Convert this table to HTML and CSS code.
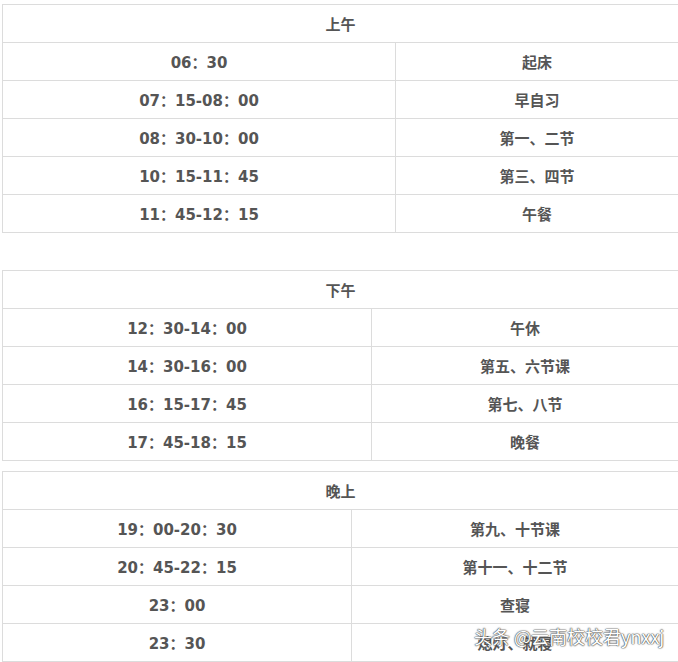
FILE: index.html
```html
<!DOCTYPE html>
<html lang="zh-CN">
<head>
<meta charset="utf-8">
<link rel="stylesheet" href="styles.css">
</head>
<body>
<div class="page">
  <table class="sched t1">
    <colgroup><col class="c1"><col></colgroup>
    <tr><th colspan="2">上午</th></tr>
    <tr><td>06：30</td><td>起床</td></tr>
    <tr><td>07：15-08：00</td><td>早自习</td></tr>
    <tr><td>08：30-10：00</td><td>第一、二节</td></tr>
    <tr><td>10：15-11：45</td><td>第三、四节</td></tr>
    <tr><td>11：45-12：15</td><td>午餐</td></tr>
  </table>
  <table class="sched t2">
    <colgroup><col class="c1"><col></colgroup>
    <tr><th colspan="2">下午</th></tr>
    <tr><td>12：30-14：00</td><td>午休</td></tr>
    <tr><td>14：30-16：00</td><td>第五、六节课</td></tr>
    <tr><td>16：15-17：45</td><td>第七、八节</td></tr>
    <tr><td>17：45-18：15</td><td>晚餐</td></tr>
  </table>
  <table class="sched t3">
    <colgroup><col class="c1"><col></colgroup>
    <tr><th colspan="2">晚上</th></tr>
    <tr><td>19：00-20：30</td><td>第九、十节课</td></tr>
    <tr><td>20：45-22：15</td><td>第十一、十二节</td></tr>
    <tr><td>23：00</td><td>查寝</td></tr>
    <tr><td>23：30</td><td>熄灯、就寝</td></tr>
  </table>
  <div class="watermark">头条 @云南校校君ynxxj</div>
</div>
</body>
</html>
```

FILE: styles.css
```css
html, body {
  margin: 0;
  padding: 0;
  background: #fff;
  overflow: hidden;
}
.page {
  position: relative;
  width: 678px;
  height: 662px;
  overflow: hidden;
  padding: 4px 0 0 2px;
  box-sizing: border-box;
}
.sched {
  border-collapse: collapse;
  table-layout: fixed;
  width: 677px;
  font-family: "DejaVu Sans", "Noto Sans CJK SC", sans-serif;
  font-weight: bold;
  font-size: 15px;
  color: #555;
}
.sched th, .sched td {
  border: 1px solid #dcdcdc;
  height: 38px;
  padding: 2px 0 0;
  text-align: center;
  vertical-align: middle;
  box-sizing: border-box;
  line-height: 20px;
}
.sched th { font-weight: bold; }
.t1 .c1 { width: 393px; }
.t2 { margin-top: 37px; }
.t2 .c1 { width: 369px; }
.t3 { margin-top: 10px; }
.t3 .c1 { width: 349px; }
.watermark {
  position: absolute;
  left: 474px;
  top: 624px;
  font-family: "Noto Sans CJK SC", sans-serif;
  font-size: 18px;
  line-height: 24px;
  color: #fff;
  text-shadow: 0 0 1px #444, 0 0 1px #444, 0 0 2px #666;
  white-space: nowrap;
}
```
